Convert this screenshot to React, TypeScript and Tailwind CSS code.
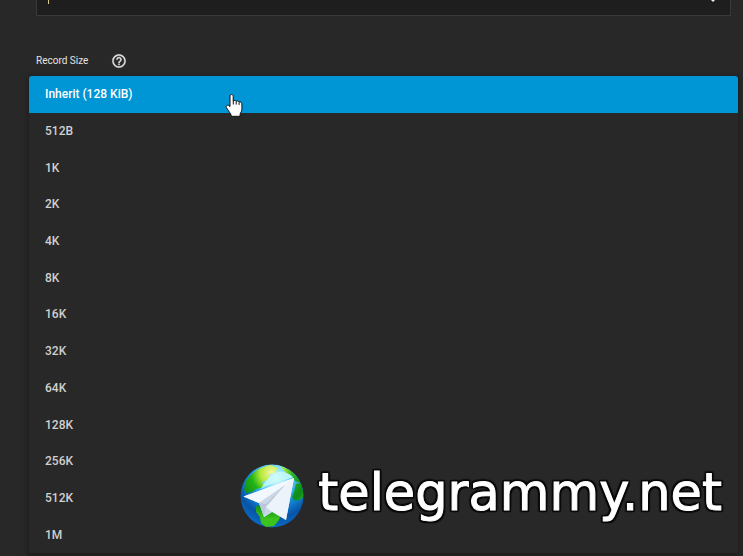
import { useState } from "react";

const recordSizes = [
  "Inherit (128 KiB)",
  "512B",
  "1K",
  "2K",
  "4K",
  "8K",
  "16K",
  "32K",
  "64K",
  "128K",
  "256K",
  "512K",
  "1M",
];

const HelpIcon = () => (
  <svg viewBox="0 0 24 24" className="size-4" fill="currentColor" aria-hidden="true">
    <path
      d="M11 18h2v-2h-2v2zm1-16C6.48 2 2 6.48 2 12s4.48 10 10 10 10-4.48 10-10S17.52 2 12 2zm0 18c-4.41 0-8-3.59-8-8s3.59-8 8-8 8 3.59 8 8-3.59 8-8 8zm0-14c-2.21 0-4 1.79-4 4h2c0-1.1.9-2 2-2s2 .9 2 2c0 2-3 1.75-3 5h2c0-2.25 3-2.5 3-5 0-2.21-1.79-4-4-4z"
      stroke="currentColor"
      strokeWidth=".4"
    />
  </svg>
);

const HandCursor = () => (
  <svg
    viewBox="0 0 18 24"
    className="pointer-events-none absolute left-[196px] top-[17px] h-6 w-[18px]"
    aria-hidden="true"
  >
    <path
      d="M5 3.2C5 .9 8.2.9 8.2 3.2V8c.8-1 2.6-.8 3 .4.9-.8 2.5-.5 2.8.7 1.2-.6 2.9.1 2.9 1.7v5.4c0 1.6-.7 2.7-1.4 3.8-.3.6-.5 1.6-.5 3.3H6.2c0-1.8-.5-2.5-1.3-3.5L1.6 15c-1.3-1.8.5-3.6 2.1-2.5L5 13.6z"
      fill="#fff"
      stroke="#111"
      strokeWidth="1"
      strokeLinejoin="round"
    />
    <path d="M8.3 8v3.5M11.2 8.6v3M14.1 9.4v2.5" stroke="#111" strokeWidth="1" />
  </svg>
);

const GlobeLogo = () => (
  <svg viewBox="0 0 64 64" className="size-16 shrink-0" aria-hidden="true">
    <defs>
      <radialGradient id="sea" gradientUnits="userSpaceOnUse" cx="36" cy="14" r="52">
        <stop offset="0" stopColor="#e6feff" />
        <stop offset=".25" stopColor="#6fdcf5" />
        <stop offset=".5" stopColor="#1590dc" />
        <stop offset=".75" stopColor="#0754a8" />
        <stop offset="1" stopColor="#0a70c8" />
      </radialGradient>
      <radialGradient id="land" gradientUnits="userSpaceOnUse" cx="32" cy="9" r="46">
        <stop offset="0" stopColor="#fbf8a0" />
        <stop offset=".25" stopColor="#b4e83c" />
        <stop offset=".45" stopColor="#22b414" />
        <stop offset=".75" stopColor="#0e8a1c" />
        <stop offset="1" stopColor="#3ac41c" />
      </radialGradient>
      <linearGradient id="wing" x1="0" y1="0" x2="1" y2="1">
        <stop offset="0" stopColor="#ffffff" />
        <stop offset="1" stopColor="#dfe9f4" />
      </linearGradient>
      <clipPath id="globe">
        <circle cx="32" cy="32" r="31.5" />
      </clipPath>
    </defs>
    <g clipPath="url(#globe)">
      <circle cx="32" cy="32" r="32" fill="url(#sea)" />
      <g fill="url(#land)">
        <path d="M6 17c4-6 9-10 15-13l9-3 8 3-3 5-5 1-2 6-6 2 2 5-8 2-4 3-6 1-2-4z" />
        <path d="M40 2l10 4 8 8 2 5-5-2-3-5-6-3z" />
        <path d="M54 28l2-8 5-1 3 11-2 5-7 2-3-4z" />
        <path d="M16 42l13-1 12 9-2 6-5 6-8 1-5-4-1-6-4-5z" />
      </g>
      <path d="M38 8c5-1 11 1 15 5l-14 5c-6 1-12 3-18 7 4-8 9-14 17-17z" fill="#c8faf8" opacity=".8" />
    </g>
    <path d="M3.5 32.5L54 14L46 56L32 48L24 53L19 39z" fill="url(#wing)" />
    <path d="M19 39L46 20L26 43L24 53z" fill="#b9c9db" />
    <path d="M26 43L32 48L24 53z" fill="#c8d6e6" />
    <path d="M26 43L54 14L46 56z" fill="#edf3fa" />
    <path d="M19 39L45 21L54 14L3.5 32.5z" fill="#f2f8ff" />
    <path d="M19 39L44 22L26 40z" fill="#ccd8e6" />
  </svg>
);

const App = () => {
  const [selected, setSelected] = useState(recordSizes[0]);

  return (
    <main className="relative min-h-screen overflow-hidden bg-[#282828] font-[Roboto,sans-serif]">
      <div className="relative ml-9 mr-3 h-4 overflow-hidden border border-t-0 border-[#3a3a3a] bg-[#1e1e1e]">
        <select aria-label="Previous setting" className="block h-full w-full appearance-none outline-none">
          <option value="" />
        </select>
        <span className="pointer-events-none absolute left-[11px] top-0 h-1 w-px bg-[#d4cf82]" />
        <svg viewBox="0 0 4 2" className="pointer-events-none absolute right-[15px] top-0 h-[2px] w-1" aria-hidden="true">
          <path d="M0 0h4L2 2z" fill="#eee" />
        </svg>
      </div>

      <div className="ml-9 mt-[37px] flex h-[23px] items-start gap-[23px] text-[#e4e4e4]">
        <span id="record-size" className="text-[10px] leading-4">
          Record Size
        </span>
        <button type="button" aria-label="Record Size help">
          <HelpIcon />
        </button>
      </div>

      <div className="relative ml-[29px] mr-[5px] shadow-[0_2px_4px_2px_#202020]">
        <div
          role="listbox"
          aria-labelledby="record-size"
          className="grid h-[477px] auto-rows-fr overflow-hidden rounded-[3px] bg-[#282828]"
        >
          {recordSizes.map((size) => (
            <button
              key={size}
              type="button"
              role="option"
              aria-selected={size === selected}
              onClick={() => setSelected(size)}
              className={`px-4 text-left text-[12px] font-medium leading-4 ${
                size === selected ? "bg-[#0095d5] text-white" : "text-[#d0d0d0]"
              }`}
            >
              {size}
            </button>
          ))}
        </div>
        <HandCursor />
      </div>

      <div className="pointer-events-none absolute bottom-7 right-[21px] flex items-start gap-[14px]">
        <GlobeLogo />
        <span className="whitespace-nowrap font-['DejaVu_Sans',sans-serif] text-[51px] leading-[58px] text-white [-webkit-text-stroke:1px_white] [text-shadow:2px_0_1px_#080808,-2px_0_1px_#080808,0_2px_1px_#080808,0_-2px_1px_#080808,2px_2px_1px_#080808,-2px_-2px_1px_#080808,2px_-2px_1px_#080808,-2px_2px_1px_#080808]">
          telegrammy.net
        </span>
      </div>
    </main>
  );
};

export default App;
